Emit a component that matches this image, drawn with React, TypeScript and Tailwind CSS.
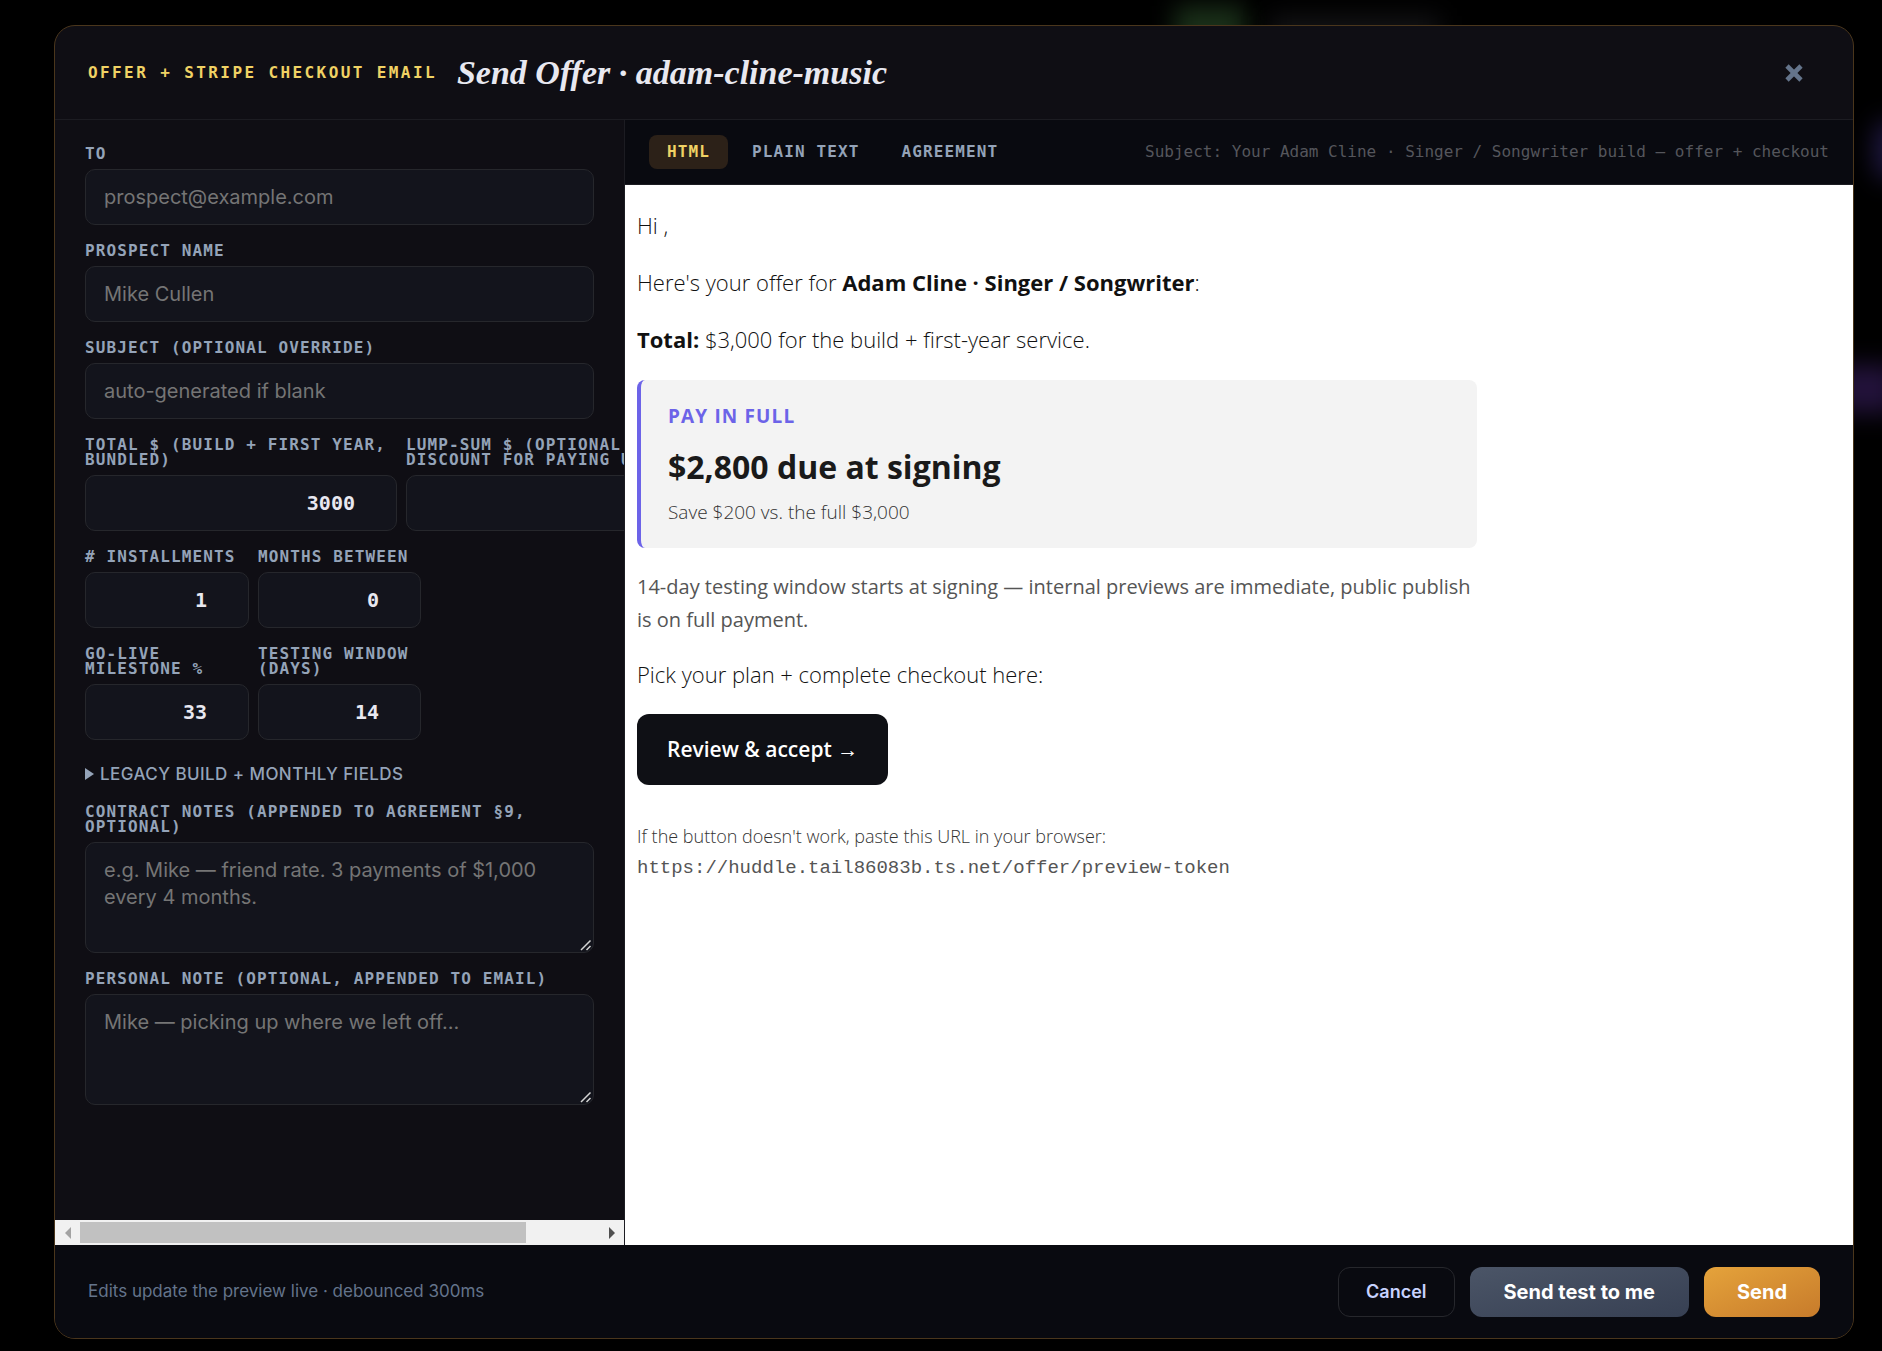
import React, { useState } from 'react';
import { X } from 'lucide-react';

const MONO = "font-['DejaVu_Sans_Mono',monospace]";
const LABEL = `${MONO} block text-[16px] leading-[15px] font-bold tracking-[0.07em] uppercase text-[#94a3b8]`;
const BOX =
  'block w-full rounded-[10px] border border-[#26272c] bg-[#13141c] px-[18px] text-[20px] placeholder:text-[#757575] focus:outline-none focus:border-[#f0d264]';

interface FieldProps {
  id: string;
  label: string;
  children: React.ReactNode;
}

const Field: React.FC<FieldProps> = ({ id, label, children }) => (
  <div className="flex flex-col justify-end gap-2">
    <label htmlFor={id} className={LABEL}>{label}</label>
    {children}
  </div>
);

interface TextFieldProps {
  id: string;
  label: string;
  placeholder: string;
}

const TextField: React.FC<TextFieldProps> = ({ id, label, placeholder }) => (
  <Field id={id} label={label}>
    <input id={id} type="text" placeholder={placeholder} className={`${BOX} h-14 text-[#e8e8f0]`} />
  </Field>
);

const AreaField: React.FC<TextFieldProps> = ({ id, label, placeholder }) => (
  <Field id={id} label={label}>
    <div className="relative">
      <textarea
        id={id}
        rows={3}
        placeholder={placeholder}
        className={`${BOX} py-3.5 leading-[27px] resize-y text-[#e8e8f0] [&::-webkit-resizer]:hidden`}
      />
      <svg
        viewBox="0 0 12 12"
        className="pointer-events-none absolute right-0.5 bottom-0.5 size-3 fill-none stroke-[#d4d4d4]"
        strokeWidth="1.5"
        aria-hidden="true"
      >
        <path d="M1 11L10.500 1.500M6.500 11L10.500 7" />
      </svg>
    </div>
  </Field>
);

interface NumberFieldProps {
  id: string;
  label: string;
  value: string;
}

const NumberField: React.FC<NumberFieldProps> = ({ id, label, value }) => (
  <Field id={id} label={label}>
    <input
      id={id}
      type="number"
      defaultValue={value}
      className={`${BOX} ${MONO} h-14 pr-[26px] text-right font-bold text-[#e8e8f0]`}
    />
  </Field>
);

const OfferForm: React.FC = () => (
  <form className="flex min-h-0 w-[570px] shrink-0 flex-col border-r border-[#1c1c22]">
    <div className="flex flex-1 flex-col gap-[18px] overflow-hidden px-[30px] pt-[26px] pb-6">
      <TextField id="to" label="To" placeholder="prospect@example.com" />
      <TextField id="name" label="Prospect name" placeholder="Mike Cullen" />
      <TextField id="subject" label="Subject (optional override)" placeholder="auto-generated if blank" />
      <div className="grid grid-cols-[312px_310px] gap-[9px]">
        <NumberField id="total" label="Total $ (build + first year, bundled)" value="3000" />
        <NumberField id="lump" label="Lump-sum $ (optional discount for paying upfront)" value="2800" />
      </div>
      <div className="grid grid-cols-[164px_163px] gap-x-[9px] gap-y-[18px]">
        <NumberField id="installments" label="# Installments" value="1" />
        <NumberField id="months" label="Months between" value="0" />
        <NumberField id="milestone" label="Go-live milestone %" value="33" />
        <NumberField id="testing" label="Testing window (days)" value="14" />
      </div>
      <details className="pt-1">
        <summary className="flex cursor-pointer list-none items-center gap-1.5 text-[17px] leading-6 font-medium tracking-wide uppercase text-[#94a3b8]">
          <svg viewBox="0 0 9 12" className="h-3 w-[9px] fill-current" aria-hidden="true">
            <path d="M0 0L9 6L0 12Z" />
          </svg>
          Legacy build + monthly fields
        </summary>
      </details>
      <AreaField
        id="contract"
        label="Contract notes (appended to agreement §9, optional)"
        placeholder="e.g. Mike — friend rate. 3 payments of $1,000 every 4 months."
      />
      <AreaField
        id="note"
        label="Personal note (optional, appended to email)"
        placeholder="Mike — picking up where we left off…"
      />
    </div>
    <div className="flex h-[25px] items-center bg-[#f1f1f1]">
      <button type="button" aria-label="Scroll left" className="flex w-[25px] justify-center text-[#a3a3a3]">
        <svg viewBox="0 0 6 12" className="h-3 w-1.5 fill-current"><path d="M6 0L0 6L6 12Z" /></svg>
      </button>
      <div className="flex-1">
        <div className="h-[21px] w-[86%] bg-[#c1c1c1]" />
      </div>
      <button type="button" aria-label="Scroll right" className="flex w-[25px] justify-center text-[#505050]">
        <svg viewBox="0 0 6 12" className="h-3 w-1.5 fill-current"><path d="M0 0L6 6L0 12Z" /></svg>
      </button>
    </div>
  </form>
);

const EmailPreview: React.FC = () => (
  <div className="flex-1 bg-white px-3 pt-6 font-['Open_Sans',sans-serif] text-[22px] leading-[33px] font-light text-[#111]">
    <div className="flex max-w-[840px] flex-col">
      <p>Hi ,</p>
      <p className="mt-6">
        Here's your offer for <strong className="font-bold">Adam Cline · Singer / Songwriter</strong>:
      </p>
      <p className="mt-6">
        <strong className="font-bold">Total:</strong> $3,000 for the build + first-year service.
      </p>
      <div className="mt-6 rounded-lg border-l-4 border-[#6c63e8] bg-[#f3f3f3] px-[27px] py-5">
        <p className="text-[19px] leading-8 font-bold tracking-[0.06em] text-[#6c63e8]">PAY IN FULL</p>
        <p className="mt-2.5 text-[32px] leading-[50px] font-bold text-[#1a1a1a]">$2,800 due at signing</p>
        <p className="mt-1 text-[19px] leading-8 text-[#333]">Save $200 vs. the full $3,000</p>
      </div>
      <p className="mt-[22px] text-[20px] font-normal text-[#555]">
        14-day testing window starts at signing — internal previews are immediate, public publish is on full payment.
      </p>
      <p className="mt-[22px]">Pick your plan + complete checkout here:</p>
      <p className="mt-[23px]">
        <a
          href="#accept"
          className="inline-block rounded-xl bg-[#0f1015] px-[30px] py-[19px] text-[21px] font-semibold text-white"
        >
          Review &amp; accept →
        </a>
      </p>
      <p className="mt-9 text-[18px] leading-[30px] text-[#333]">
        If the button doesn't work, paste this URL in your browser:
        <br />
        <code className="font-['Liberation_Mono',monospace] text-[19px] text-[#555]">
          https://huddle.tail86083b.ts.net/offer/preview-token
        </code>
      </p>
    </div>
  </div>
);

const TABS = ['HTML', 'Plain text', 'Agreement'];

const PreviewPane: React.FC = () => {
  const [tab, setTab] = useState('HTML');

  return (
    <section className="flex min-w-0 flex-1 flex-col">
      <div className={`${MONO} flex items-center gap-1.5 border-b border-[#1c1c22] bg-[#090a10] px-6 py-[15px]`}>
        {TABS.map((name) => (
          <button
            key={name}
            type="button"
            onClick={() => setTab(name)}
            className={`h-[34px] rounded-lg px-[18px] text-[16px] font-bold tracking-[0.07em] uppercase ${
              tab === name ? 'bg-[#2c2118] text-[#f0d264]' : 'text-[#94a3b8]'
            }`}
          >
            {name}
          </button>
        ))}
        <span className="ml-auto truncate text-[16px] text-[#55565c]">
          Subject: Your Adam Cline · Singer / Songwriter build — offer + checkout
        </span>
      </div>
      <EmailPreview />
    </section>
  );
};

const App: React.FC = () => (
  <div className="relative flex min-h-screen overflow-hidden bg-black pt-[25px] pr-7 pb-3 pl-[54px] font-['Inter',sans-serif]">
    <div className="absolute top-1.5 left-[1175px] h-12 w-[70px] bg-[#1a3019] blur-md" />
    <div className="absolute top-4 left-[1270px] h-8 w-[170px] bg-[#131315] blur-md" />
    <div className="absolute top-[120px] -right-6 h-[60px] w-8 rounded-full bg-[#1e1740] blur-md" />
    <div className="absolute top-[365px] -right-4 h-12 w-16 bg-[#22123a] blur-md" />

    <div
      role="dialog"
      aria-labelledby="offer-title"
      className="relative flex min-w-0 flex-1 flex-col overflow-hidden rounded-[21px] border border-[#4a361c] bg-[#0f0e14]"
    >
      <header className="flex h-[94px] items-center gap-5 border-b border-[#1c1c22] px-[33px]">
        <span className={`${MONO} text-[16px] font-bold tracking-[0.15em] uppercase text-[#f0d264]`}>
          Offer + Stripe checkout email
        </span>
        <h1
          id="offer-title"
          className="font-['Liberation_Serif',serif] text-[34px] leading-10 font-bold italic text-[#e8e8f0]"
        >
          Send Offer · adam-cline-music
        </h1>
        <button type="button" aria-label="Close" className="ml-auto p-3 text-[#64748b]">
          <X size={28} strokeWidth={4} strokeLinecap="butt" />
        </button>
      </header>

      <div className="flex flex-1">
        <OfferForm />
        <PreviewPane />
      </div>

      <footer className="flex h-[93px] items-center gap-[15px] bg-[#090a10] px-[33px]">
        <p className="mr-auto text-[17px] text-[#64748b]">Edits update the preview live · debounced 300ms</p>
        <button
          type="button"
          className="h-[50px] rounded-xl border border-[#26272c] px-[27px] text-[18px] font-semibold text-[#c7d2fe]"
        >
          Cancel
        </button>
        <button
          type="button"
          className="h-[50px] rounded-xl bg-linear-to-br from-[#4b5567] to-[#374053] px-[34px] text-[20px] font-bold text-white"
        >
          Send test to me
        </button>
        <button
          type="button"
          className="h-[50px] rounded-xl bg-linear-to-br from-[#e5a33b] to-[#c77b2b] px-[33px] text-[20px] font-bold text-white"
        >
          Send
        </button>
      </footer>
    </div>
  </div>
);

export default App;
